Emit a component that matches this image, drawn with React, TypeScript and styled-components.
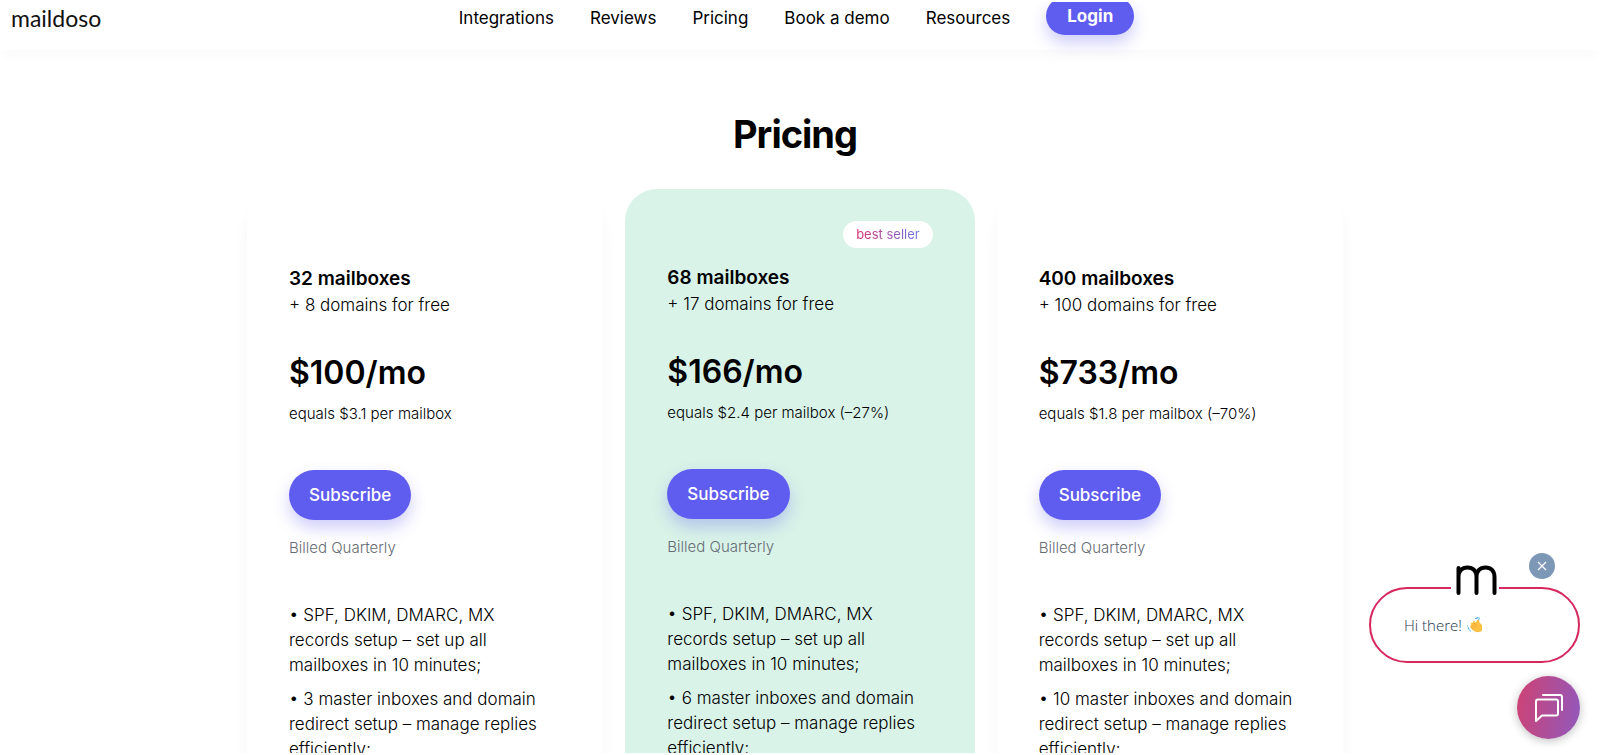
import React from "react";
import styled, { createGlobalStyle } from "styled-components";

const GlobalStyle = createGlobalStyle`
  body { margin: 0; background: #fff; color: #000; font-family: Inter, "Liberation Sans", sans-serif; }
  * { box-sizing: border-box; }
`;

const Page = styled.div`
  height: 100vh;
  border: 2px solid #fff;
  overflow: hidden auto;
  scrollbar-width: none;
`;

const Header = styled.header`
  display: grid;
  grid-template-columns: 1fr auto 1fr;
  align-items: center;
  height: 64px;
  margin-top: -16px;
  padding: 0 16px 0 9px;
  background: #fff;
  box-shadow: 0 8px 12px rgba(0, 0, 0, 0.02);
`;

const Wordmark = styled.a`
  color: #111;
  font: 400 23px/28px Lato, sans-serif;
  text-decoration: none;
`;

const Nav = styled.nav`
  display: flex;
  align-items: center;
  gap: 36px;
`;

const NavLink = styled.a`
  color: #000;
  font-size: 17px;
  line-height: 24px;
  text-decoration: none;
`;

const PillButton = styled.button<{ $small?: boolean }>`
  height: ${(p) => (p.$small ? 38 : 50)}px;
  padding: 0 ${(p) => (p.$small ? 21 : 20)}px;
  margin-bottom: ${(p) => (p.$small ? 4 : 0)}px;
  border: 0;
  border-radius: 25px;
  background: #5f5cf0;
  box-shadow: 0 8px 16px rgba(95, 92, 240, 0.3);
  color: #fff;
  font-family: inherit;
  font-size: 17px;
  font-weight: ${(p) => (p.$small ? 700 : 500)};
  cursor: pointer;
`;

const Content = styled.main`
  padding-right: 10px;
`;

const Title = styled.h1`
  margin: 59px 0 29px;
  font-size: 38px;
  line-height: 51px;
  font-weight: 700;
  letter-spacing: -1px;
  text-align: center;
`;

const Plans = styled.div`
  display: grid;
  grid-template-columns: 356fr 349fr 346fr;
  gap: 22px;
  max-width: 1096px;
  margin: 0 auto;
`;

const Card = styled.section<{ $featured?: boolean }>`
  position: relative;
  padding: ${(p) => (p.$featured ? 76 : 77)}px 46px 60px 42px;
  border-radius: 32px;
  background: ${(p) => (p.$featured ? "#d9f3e8" : "#fff")};
  box-shadow: ${(p) => (p.$featured ? "none" : "0 14px 16px rgba(0, 0, 0, 0.04)")};
`;

const Badge = styled.span`
  position: absolute;
  top: 32px;
  right: 42px;
  padding: 0 13px;
  border-radius: 14px;
  background: #fff;
  font-size: 13px;
  line-height: 27px;
`;

const BadgeText = styled.span`
  background: linear-gradient(90deg, #d9286b, #6a7bea);
  background-clip: text;
  color: transparent;
`;

const Mailboxes = styled.h2`
  margin: 0;
  font-size: 19px;
  line-height: 26px;
  font-weight: 600;
`;

const Domains = styled.p`
  margin: 0 0 34px;
  font-size: 17px;
  line-height: 27px;
  font-weight: 350;
`;

const Price = styled.p`
  margin: 0;
  font-size: 32px;
  line-height: 40px;
  font-weight: 600;
`;

const Note = styled.p<{ $muted?: boolean }>`
  margin: ${(p) => (p.$muted ? "16px 0 43px" : "9px 0 44px")};
  color: ${(p) => (p.$muted ? "#666c75" : "#000")};
  font-size: 15px;
  line-height: 24px;
  font-weight: 350;
`;

const Features = styled.ul`
  margin: 0;
  padding: 0;
  list-style: none;
`;

const Feature = styled.li`
  margin-bottom: 9px;
  font-size: 17px;
  line-height: 25px;
  font-weight: 350;
`;

const Chat = styled.aside`
  position: fixed;
  right: 20px;
  bottom: 16px;
  display: flex;
  flex-direction: column;
  align-items: flex-end;
  gap: 13px;
`;

const Greeting = styled.div`
  position: relative;
  display: flex;
  align-items: center;
  gap: 5px;
  width: 211px;
  height: 76px;
  padding-left: 33px;
  border: 2px solid #d6285f;
  border-radius: 38px;
  background: #fff;
  color: #23374b;
  font: 350 15px/24px "Open Sans", sans-serif;
`;

const Mark = styled.span`
  position: absolute;
  top: -24px;
  left: 80px;
  display: flex;
  padding: 0 2px 0 5px;
  background: #fff;
`;

const CloseButton = styled.button`
  position: absolute;
  top: -36px;
  right: 23px;
  display: grid;
  place-items: center;
  width: 26px;
  height: 26px;
  padding: 0;
  border: 0;
  border-radius: 50%;
  background: #7c98b6;
  cursor: pointer;
`;

const ChatButton = styled.button`
  display: grid;
  place-items: center;
  width: 63px;
  height: 63px;
  padding: 0;
  border: 0;
  border-radius: 50%;
  background: linear-gradient(100deg, #cf4272, #9059bd);
  box-shadow: 0 2px 10px rgba(0, 0, 0, 0.25);
  cursor: pointer;
`;

const plans = [
  { mailboxes: 32, domains: 8, price: 100, note: "equals $3.1 per mailbox", inboxes: 3 },
  { mailboxes: 68, domains: 17, price: 166, note: "equals $2.4 per mailbox (–27%)", inboxes: 6, featured: true },
  { mailboxes: 400, domains: 100, price: 733, note: "equals $1.8 per mailbox (–70%)", inboxes: 10 },
];

const links = ["Integrations", "Reviews", "Pricing", "Book a demo", "Resources"];

export default function App() {
  return (
    <>
      <GlobalStyle />
      <Page>
        <Header>
          <Wordmark href="#">maildoso</Wordmark>
          <Nav>
            {links.map((l) => <NavLink href="#" key={l}>{l}</NavLink>)}
            <PillButton $small>Login</PillButton>
          </Nav>
        </Header>
        <Content>
          <Title>Pricing</Title>
          <Plans>
            {plans.map((p) => (
              <Card key={p.mailboxes} $featured={p.featured}>
                {p.featured && <Badge><BadgeText>best seller</BadgeText></Badge>}
                <Mailboxes>{`${p.mailboxes} mailboxes`}</Mailboxes>
                <Domains>{`+ ${p.domains} domains for free`}</Domains>
                <Price>{`$${p.price}/mo`}</Price>
                <Note>{p.note}</Note>
                <PillButton>Subscribe</PillButton>
                <Note $muted>Billed Quarterly</Note>
                <Features>
                  <Feature>• SPF, DKIM, DMARC, MX records setup – set up all mailboxes in 10 minutes;</Feature>
                  <Feature>{`• ${p.inboxes} master inboxes and domain redirect setup – manage replies efficiently;`}</Feature>
                </Features>
              </Card>
            ))}
          </Plans>
        </Content>
      </Page>
      <Chat>
        <Greeting>
          <Mark aria-hidden="true">
            <svg width="41" height="30" viewBox="0 0 41 30" fill="none" stroke="#000" strokeWidth="4" strokeLinecap="round" strokeLinejoin="round">
              <path d="M2.500 3v25M2.500 12c0-6 3.500-9.500 9-9.500s9 3.500 9 9.500v16M20.500 12c0-6 3.500-9.500 9-9.500s9 3.500 9 9.500v16" />
            </svg>
          </Mark>
          <CloseButton aria-label="Close">
            <svg width="10" height="10" viewBox="0 0 10 10" stroke="#fff" strokeWidth="1.2"><path d="M1 1l8 8M9 1l-8 8" /></svg>
          </CloseButton>
          Hi there!
          <svg width="15" height="16" viewBox="0 0 15 16">
            <path d="M3.500 10.500Q2.500 9 4 8.500L3.800 6.500Q4.500 5 5.800 5.800Q5.800 3.500 7.500 4.200L9 5.500Q10.500 1.500 12 3.500L12.500 5.500L15 8V14Q11 16 8 14.500Q5 13 3.500 10.500Z" fill="#fcc142" />
            <path d="M5.500 8l3 3M6.800 6l3 3.500M4.500 10l2.500 2.500" stroke="#ef9a35" strokeWidth="0.8" fill="none" />
            <path d="M8 1.500q3-.5 4.500 1.500M9.500.5q2-.2 3.500 1M1 10q.3 3 3 4.500M.5 8.500v1" stroke="#63b4e4" strokeWidth="1" fill="none" />
          </svg>
        </Greeting>
        <ChatButton aria-label="Open chat">
          <svg width="30" height="30" viewBox="0 0 30 30" fill="none" stroke="#fff" strokeWidth="2" strokeLinejoin="round" strokeLinecap="round">
            <path d="M2 8.500q0-2 2-2h18q2 0 2 2v12q0 2-2 2H8l-6 5.500z" />
            <path d="M9 2h17q2 0 2 2v13" />
          </svg>
        </ChatButton>
      </Chat>
    </>
  );
}
